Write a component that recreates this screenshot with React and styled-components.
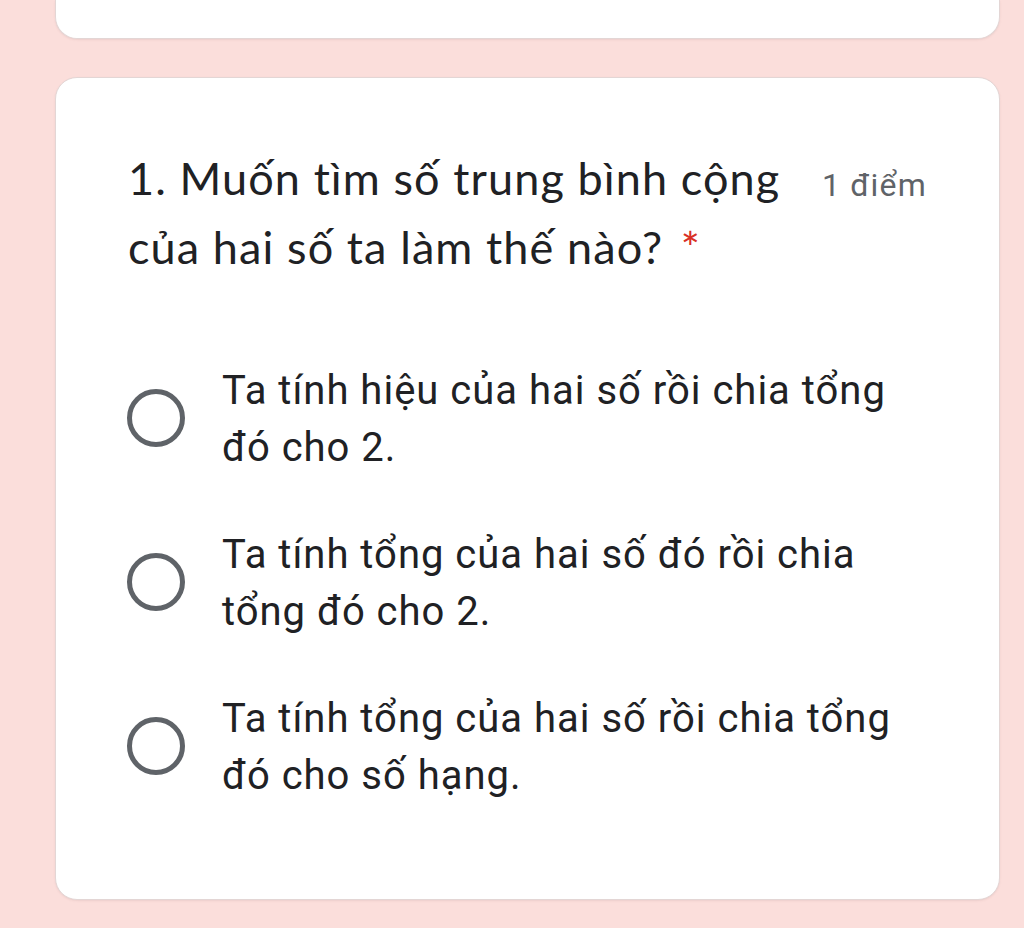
import React from "react";
import styled, { createGlobalStyle } from "styled-components";

const GlobalStyle = createGlobalStyle`
  html, body {
    margin: 0;
    padding: 0;
    background: #fbdedb;
  }
`;

const Page = styled.div`
  display: flex;
  flex-direction: column;
  gap: 38px;
  padding: 0 24px 0 55px;
  min-height: 928px;
  box-sizing: border-box;
`;

const Card = styled.div`
  background: #ffffff;
  width: 945px;
  box-sizing: border-box;
  border: 1px solid #e3d6d5;
  border-radius: 22px;
  box-shadow: 0 1px 2px rgba(160, 120, 120, 0.15);
`;

const TopCard = styled(Card)`
  height: 39px;
  border-top: none;
  border-top-left-radius: 0;
  border-top-right-radius: 0;
`;

const QuestionCard = styled(Card)`
  height: 823px;
  padding: 66px 72px 0 72px;
`;

const Header = styled.div`
  display: flex;
  align-items: flex-start;
  gap: 24px;
`;

const Title = styled.div`
  flex: 1;
  font-family: Lato, "Open Sans", sans-serif;
  font-size: 45px;
  letter-spacing: 1.1px;
  line-height: 69px;
  color: #202124;
`;

const Required = styled.span`
  color: #d93025;
  padding-left: 5px;
`;

const Points = styled.div`
  padding-top: 7px;
  font-family: Roboto, "Noto Sans", sans-serif;
  font-size: 32px;
  letter-spacing: 1.2px;
  line-height: 69px;
  color: #5f6368;
  white-space: nowrap;
`;

const Options = styled.div`
  display: flex;
  flex-direction: column;
  gap: 50px;
  margin-top: 80px;
`;

const Option = styled.label`
  display: flex;
  align-items: center;
  gap: 37px;
`;

const Radio = styled.span`
  flex: none;
  width: 58px;
  height: 58px;
  box-sizing: border-box;
  border: 5px solid #5f6368;
  border-radius: 50%;
  margin-left: -1px;
  margin-top: -2px;
`;

const OptionText = styled.div`
  font-family: Roboto, "Noto Sans", sans-serif;
  font-size: 40px;
  letter-spacing: 1px;
  line-height: 57px;
  color: #202124;
  max-width: 700px;
`;

const options = [
  ["Ta tính hiệu của hai số rồi chia tổng", "đó cho 2."],
  ["Ta tính tổng của hai số đó rồi chia", "tổng đó cho 2."],
  ["Ta tính tổng của hai số rồi chia tổng", "đó cho số hạng."],
];

export default function App() {
  return (
    <>
      <GlobalStyle />
      <Page>
        <TopCard />
        <QuestionCard>
          <Header>
            <Title>
              1. Muốn tìm số trung bình cộng của hai số ta làm thế nào?{" "}
              <Required>*</Required>
            </Title>
            <Points>1 điểm</Points>
          </Header>
          <Options>
            {options.map(([a, b]) => (
              <Option key={a}>
                <Radio />
                <OptionText>
                  {a}
                  <br />
                  {b}
                </OptionText>
              </Option>
            ))}
          </Options>
        </QuestionCard>
      </Page>
    </>
  );
}
